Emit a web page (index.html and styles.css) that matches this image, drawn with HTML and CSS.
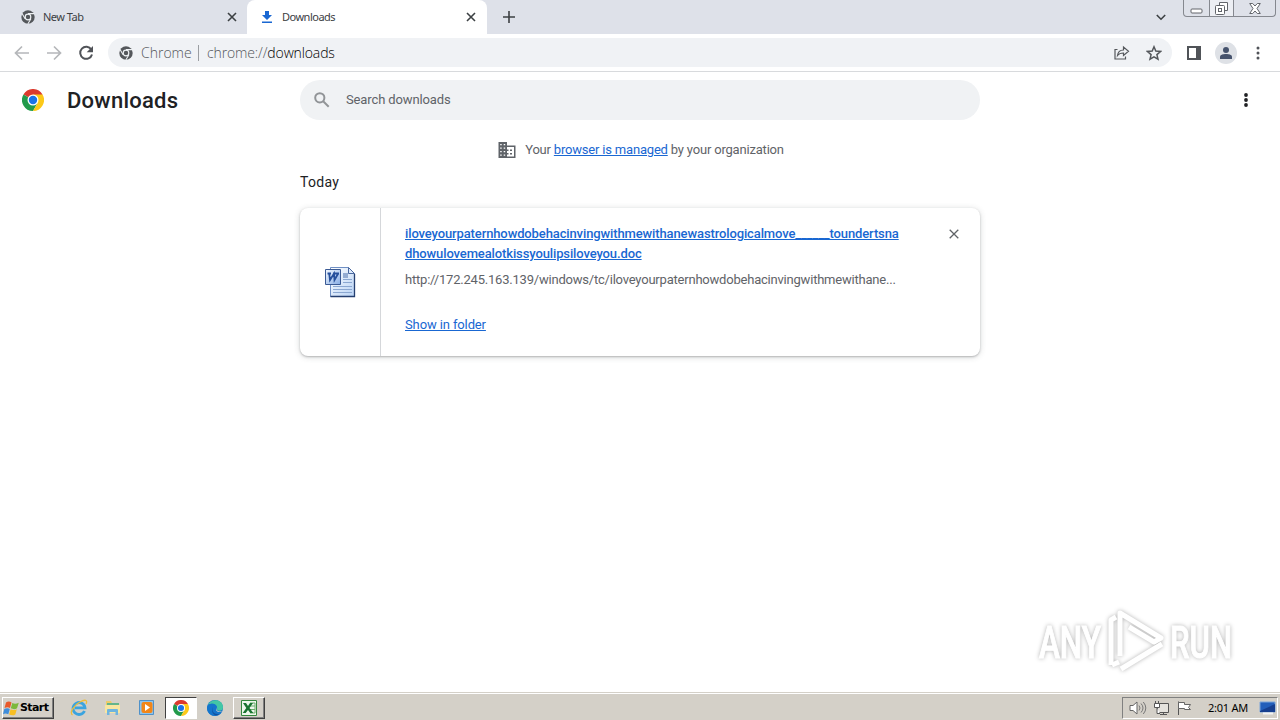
FILE: index.html
```html
<!DOCTYPE html>
<html lang="en">

<head>
    <meta charset="UTF-8">
    <meta name="viewport" content="width=device-width, initial-scale=1.0">
    <title>Downloads</title>
    <link rel="stylesheet" href="styles.css">
</head>

<body>
    <svg class="defs" width="0" height="0">
        <symbol id="chrome-gray" viewBox="0 0 24 24">
            <circle cx="12" cy="12" r="11.5" fill="#54575b" />
            <circle cx="12" cy="12" r="4.8" fill="#54575b" stroke="#eef1f4" stroke-width="2" />
            <path d="M12 6.2h10.8M7 14.9L1.6 5.7M17 14.9l-5.3 9" stroke="#eef1f4" stroke-width="1.8" />
        </symbol>
        <symbol id="chrome-color" viewBox="0 0 24 24">
            <path d="M12 12L1.6 6A12 12 0 0 1 22.4 6z" fill="#db3a2e" />
            <path d="M12 12L1.6 6A12 12 0 0 0 12 24l5.2-9z" fill="#229a4b" />
            <path d="M12 6h10.4A12 12 0 0 1 12 24l5.2-9z" fill="#fcc919" />
            <circle cx="12" cy="12" r="6" fill="#fff" />
            <circle cx="12" cy="12" r="4.6" fill="#1a73e8" />
        </symbol>
    </svg>

    <div class="tab-strip">
        <div class="tab">
            <svg class="tab-icon" width="14" height="14"><use href="#chrome-gray" /></svg>
            <span class="tab-title">New Tab</span>
            <svg class="tab-close" width="10" height="10" viewBox="0 0 10 10"><path d="M1 1l8 8M9 1L1 9" /></svg>
        </div>
        <div class="tab active">
            <svg class="tab-icon" width="14" height="14" viewBox="0 0 14 14"><path d="M5 1h4v4h3L7 10 2 5h3zM2 11.6h10V13H2z" fill="#1967d2" /></svg>
            <span class="tab-title">Downloads</span>
            <svg class="tab-close" width="10" height="10" viewBox="0 0 10 10"><path d="M1 1l8 8M9 1L1 9" /></svg>
        </div>
        <svg class="new-tab" width="12" height="12" viewBox="0 0 12 12"><path d="M6 0v12M0 6h12" /></svg>
        <svg class="tab-search" width="10" height="7" viewBox="0 0 10 7"><path d="M.8 1L5 5.2 9.200 1" /></svg>
        <div class="window-buttons">
            <span class="win-btn min"><svg width="13" height="6" viewBox="0 0 13 6"><rect x="1" y="1" width="11" height="4" rx="1" /></svg></span>
            <span class="win-btn max"><svg width="13" height="13" viewBox="0 0 13 13"><path d="M4.500 3.500v-3h8v8h-3" /><rect x=".5" y="3.500" width="9" height="9" rx="1" /><rect x="3.500" y="6.500" width="3" height="3" /></svg></span>
            <span class="win-btn close"><svg width="12" height="11" viewBox="0 0 12 11"><path d="M.7.500h3L6 3 8.300.500h3L8 5.500l3.300 5h-3L6 8l-2.300 2.500h-3L4 5.500z" /></svg></span>
        </div>
    </div>

    <div class="toolbar">
        <svg class="nav-btn" width="16" height="16" viewBox="0 0 16 16"><path d="M15 8H2M8 1.500L1.500 8 8 14.500" stroke="#b5b7ba" /></svg>
        <svg class="nav-btn" width="16" height="16" viewBox="0 0 16 16"><path d="M1 8h13M8 1.500L14.500 8 8 14.500" stroke="#b5b7ba" /></svg>
        <svg class="nav-btn" width="16" height="16" viewBox="0 0 16 16"><path d="M13.300 4.600A6 6 0 1 0 14 9.400" stroke="#505358" stroke-width="2" /><path d="M15 1v6.300H8.700z" fill="#505358" stroke="none" /></svg>
        <div class="omnibox">
            <svg width="14" height="14"><use href="#chrome-gray" /></svg>
            <span class="chip">Chrome</span>
            <span class="url">chrome://<b>downloads</b></span>
            <svg class="share" width="16" height="15" viewBox="0 0 16 15"><path d="M3.500 4.500H1V14h10.500v-2.500M3.500 10.500C4 6.500 6 5 9.500 5V2l5 4.300-5 4.200V8C7 8 5 8.500 3.500 10.500z" /></svg>
            <svg class="star" width="16" height="16" viewBox="0 0 16 16"><path d="M8 1.800l1.800 4.300 4.700.4-3.600 3.100 1.100 4.600L8 11.800l-4 2.400 1.100-4.600L1.500 6.500l4.700-.4z" /></svg>
        </div>
        <svg class="side-panel" width="14" height="14" viewBox="0 0 14 14"><path d="M1 1h12v12H1z" fill="#fff" stroke="#505358" stroke-width="2" /><path d="M9 0h5v14H9z" fill="#505358" /></svg>
        <span class="avatar"><svg width="12" height="12" viewBox="0 0 12 12"><circle cx="6" cy="3" r="3" /><path d="M0 12v-2c0-2.200 3-3 6-3s6 .8 6 3v2z" /></svg></span>
        <svg class="menu" width="4" height="14" viewBox="0 0 4 14" fill="#505358"><circle cx="2" cy="2" r="1.500" /><circle cx="2" cy="7" r="1.500" /><circle cx="2" cy="12" r="1.500" /></svg>
    </div>

    <div class="page">
        <header class="header">
            <svg class="logo" width="22" height="22"><use href="#chrome-color" /></svg>
            <h1>Downloads</h1>
            <div class="search">
                <svg width="16" height="16" viewBox="0 0 16 16"><circle cx="5.800" cy="5.800" r="4.600" /><path d="M9.200 9.200l5.500 5.500" /></svg>
                <span>Search downloads</span>
            </div>
            <svg class="more" width="4" height="14" viewBox="0 0 4 14" fill="#202124"><circle cx="2" cy="2" r="1.900" /><circle cx="2" cy="7" r="1.900" /><circle cx="2" cy="12" r="1.900" /></svg>
        </header>

        <main class="content">
            <div class="managed">
                <svg width="18" height="16" viewBox="0 0 18 16">
                    <path d="M.5 0H9v3.500h8.500V16H.5z" fill="#5f6368" />
                    <path d="M2.200 2h1.500v1.300H2.200zM5.700 2h1.500v1.300H5.700zM2.200 5.500h1.500v1.300H2.200zM5.700 5.500h1.500v1.300H5.700zM2.200 9h1.500v1.300H2.200zM5.700 9h1.500v1.300H5.700zM2.200 12.500h1.500v1.300H2.200zM5.700 12.500h1.500v1.300H5.700zM9 5h7v9.500H9v-2h1.500V11H9V9h1.500V7.500H9z" fill="#fff" />
                    <path d="M12 7.500h2V9h-2zM12 11h2v1.500h-2z" fill="#5f6368" />
                </svg>
                <p>Your <a>browser is managed</a> by your organization</p>
            </div>
            <h2 class="date">Today</h2>
            <div class="card">
                <div class="file-icon">
                    <svg width="32" height="32" viewBox="0 0 32 32">
                        <defs>
                            <linearGradient id="paper" x1="0" y1="0" x2="1" y2="1"><stop offset="0" stop-color="#fff" /><stop offset="1" stop-color="#b9d3f5" /></linearGradient>
                            <linearGradient id="badge" x1="0" y1="0" x2="1" y2="1"><stop offset="0" stop-color="#f4f9ff" /><stop offset="1" stop-color="#86ace5" /></linearGradient>
                        </defs>
                        <path d="M6.500 1.500h18l6 6v23h-24z" fill="url(#paper)" stroke="#6f8fc4" />
                        <path d="M30.500 8v22.500h-24" fill="none" stroke="#253f70" stroke-width="1.300" />
                        <path d="M24.500 1.500v6h6z" fill="#dbe8fb" stroke="#4a689e" />
                        <path d="M19 7h5v5h-5z" fill="#94acd2" />
                        <path d="M19 13.500h9M19 16.500h9M9 20.500h19M9 23.500h19M9 26.500h19" stroke="#8ba7d1" />
                        <path d="M1.500 3.500h15v15h-15z" fill="url(#badge)" stroke="#3b5a94" />
                        <path d="M3.500 7.500H7M9 7.500h6M5.200 7.500L6 14l4-6.500.500 6.500 3.700-6.500" fill="none" stroke="#254f9c" stroke-width="1.800" />
                    </svg>
                </div>
                <div class="details">
                    <a class="file-name">iloveyourpaternhowdobehacinvingwithmewithanewastrologicalmove______toundertsna<br>dhowulovemealotkissyoulipsiloveyou.doc</a>
                    <p class="file-url">http://172.245.163.139/windows/tc/iloveyourpaternhowdobehacinvingwithmewithane...</p>
                    <a class="show">Show in folder</a>
                </div>
                <svg class="remove" width="10" height="10" viewBox="0 0 10 10"><path d="M.7.700l8.600 8.600M9.300.700L.7 9.300" /></svg>
            </div>
        </main>
    </div>

    <svg class="watermark" width="220" height="72" viewBox="0 0 220 72">
        <text x="9" y="53" textLength="62" lengthAdjust="spacingAndGlyphs">ANY</text>
        <text x="140" y="53" textLength="62" lengthAdjust="spacingAndGlyphs">RUN</text>
        <path d="M81 60V15l5-3" />
        <path d="M90 51V8l41 25-7 4-25-15" />
        <path d="M82 60l7-3M91 64l41-25" />
    </svg>

    <div class="taskbar">
        <div class="start">
            <svg width="17" height="16" viewBox="0 0 17 16">
                <path d="M3 2.500c2-1.500 4-1 5.500 0L7 8C5.500 7 3.500 7 1.500 8z" fill="#e8592b" />
                <path d="M9.300 3c2 1 4 1 6.500-.3L14 8.300c-2 1.200-4 1-6.200 0z" fill="#7cb83c" />
                <path d="M1.300 9c2-1.200 4-1 5.500 0l-1.500 5.300c-2-1.200-4-1-5.300 0z" fill="#3f8ddb" />
                <path d="M7.600 9.300c2 1 4 1 6.200-.1L12.300 14.500c-2 1.200-4 1-6.200 0z" fill="#f8bf24" />
            </svg>
            <span>Start</span>
        </div>
        <div class="task ie">
            <svg width="18" height="18" viewBox="0 0 18 18"><path d="M14.500 12A6 6 0 1 1 15 8.800H5" fill="none" stroke="#3ba4df" stroke-width="2.800" /><path d="M2.500 16C-1 14 4 6 10 3c5-3 8-2 6 2" fill="none" stroke="#edbd3a" stroke-width="1.300" /></svg>
        </div>
        <div class="task">
            <svg width="18" height="18" viewBox="0 0 18 18"><path d="M2 2h5l1 2h7v10H2z" fill="#edcc68" /><path d="M3 4h12v3H3z" fill="#64b58a" /><path d="M1 6h15v8H1z" fill="#f8e6a0" /><path d="M3 16v-5q0-1 1-1h9q1 0 1 1v5h-2.500v-3h-6v3z" fill="#6eb4df" /></svg>
        </div>
        <div class="task">
            <svg width="18" height="18" viewBox="0 0 18 18"><path d="M1.500 1.500h14v14h-14z" fill="#8ec4ec" stroke="#4f91c9" /><rect x="3.500" y="3" width="11" height="11" rx="2" fill="#f28618" /><path d="M7 5l5 3.500L7 12z" fill="#fff" /></svg>
        </div>
        <div class="task pressed">
            <svg width="16" height="16"><use href="#chrome-color" /></svg>
        </div>
        <div class="task">
            <svg width="18" height="18" viewBox="0 0 18 18"><circle cx="9" cy="9" r="8" fill="#1877c9" /><path d="M2 6C5-1 17 0 17 8.500c0 4-6 4-6 1.500C12 6 6 3 2 6z" fill="#43c7a5" /><path d="M1 9c0-5 10-6 10 0 0 0-3 3 2 4l3-.5C11 20 1 17 1 9z" fill="#1475cc" /><path d="M7 8c-2 5 2 8 7 7-5 4-10-2-7-7z" fill="#15509c" /><path d="M10.500 8c-1 3 1 5 6 4.500-4 1.500-8 0-6-4.500z" fill="#d4d0c8" /></svg>
        </div>
        <div class="task raised">
            <svg width="18" height="18" viewBox="0 0 18 18"><path d="M1.500 1.500h15v15h-15z" fill="#eef7ec" stroke="#34873d" /><path d="M10 4h5v10h-5M10 7h5M10 10.500h5" fill="none" stroke="#6bad6c" /><path d="M3 4h3l2 3 2-3h3L9.500 9l3.800 5h-3L8 11l-2.300 3h-3L6.300 9z" fill="#197431" /></svg>
        </div>
        <div class="tray">
            <svg width="18" height="16" viewBox="0 0 18 16"><path d="M1 5.500h3L8 2v12l-4-3.500H1z" fill="#fff" stroke="#666" /><path d="M10 5.500q2 2.500 0 5M12 3.500q4 4.500 0 9M14.300 2q5 6 0 12" fill="none" stroke="#777" /></svg>
            <svg width="17" height="16" viewBox="0 0 17 16"><path d="M4.500 3.500h11v9h-11z" fill="#e4e2dd" stroke="#555" /><path d="M7 14.500h7M10.500 12v2" stroke="#555" /><path d="M1.500 3.500h5v4h-5zM2.500 1v2M5.500 1v2M4 8v5.500h3" fill="#fff" stroke="#555" /></svg>
            <svg width="17" height="16" viewBox="0 0 17 16"><path d="M2.500 15V1.500" stroke="#555" /><path d="M2.500 2.500h6v2h6l-2 3 2 2h-6v-1h-6z" fill="#fff" stroke="#666" /></svg>
            <span class="clock">2:01 AM</span>
            <svg width="17" height="14" viewBox="0 0 17 14"><path d="M1 1h15v10H1z" fill="#245fba" stroke="#7ba5da" /><path d="M1 10L16 3v8H1z" fill="#173f8f" /><path d="M4 12.500h10" stroke="#f3f3f3" stroke-width="2" /></svg>
        </div>
    </div>
</body>

</html>
```
FILE: styles.css
```css
* {
    box-sizing: border-box;
}

body {
    display: flex;
    flex-direction: column;
    height: 720px;
    margin: 0;
    overflow: hidden;
    background: #fff;
    font-family: Roboto, "Liberation Sans", sans-serif;
    color: #202124;
}

svg {
    flex: none;
}

.defs {
    position: absolute;
}

h1,
h2,
p {
    margin: 0;
    font-weight: 400;
}

/* tabs */
.tab-strip {
    display: flex;
    align-items: center;
    height: 34px;
    background: #dee1e9;
    font-family: "Noto Sans", sans-serif;
    font-size: 11px;
}

.tab {
    display: flex;
    align-items: center;
    width: 247px;
    height: 34px;
    padding: 0 10px 0 21px;
    color: #3c4043;
}

.tab.active {
    width: 240px;
    padding: 0 11px 0 13px;
    border-radius: 8px 8px 0 0;
    background: #fff;
}

.tab-title {
    flex: 1;
    margin: -1px 0 0 8px;
    letter-spacing: -.5px;
}

.tab-close,
.new-tab,
.tab-search {
    fill: none;
    stroke: #3c4043;
    stroke-width: 1.6;
}

.new-tab {
    margin-left: 16px;
}

.tab-search {
    margin-left: auto;
    margin-right: 17px;
}

.window-buttons {
    display: flex;
    align-self: flex-start;
    width: 93px;
    height: 17px;
    margin-right: 4px;
    border: 1px solid #85888f;
    border-top: 0;
    border-radius: 0 0 4px 4px;
}

.win-btn {
    display: flex;
    justify-content: center;
    align-items: center;
    width: 25px;
    fill: #fff;
    stroke: #62656b;
}

.win-btn.min {
    padding-top: 5px;
}

.win-btn.max {
    border: solid #85888f;
    border-width: 0 1px;
    background: #eceef3;
}

.win-btn.close {
    flex: 1;
}

/* toolbar */
.toolbar {
    display: flex;
    align-items: center;
    height: 38px;
    padding-left: 14px;
    border-bottom: 1px solid #d8dadd;
}

.nav-btn {
    margin-right: 16px;
    fill: none;
    stroke-width: 1.7;
}

.omnibox {
    display: flex;
    align-items: center;
    width: 1064px;
    height: 29px;
    margin-left: -2px;
    padding: 0 10px 0 11px;
    border-radius: 15px;
    background: #f0f2f5;
    font-family: "Open Sans", "Noto Sans", sans-serif;
    font-size: 14px;
    font-weight: 300;
    color: #54575b;
}

.chip {
    width: 58px;
    margin-left: 8px;
    border-right: 1px solid #9b9ea2;
    line-height: 16px;
}

.url {
    flex: 1;
    margin-left: 8px;
    letter-spacing: -.13px;
}

.url b {
    font-weight: 300;
    color: #000;
}

.share,
.star {
    fill: none;
    stroke: #54575b;
    stroke-width: 1.2;
}

.star {
    margin-left: 16px;
    stroke-width: 1.5;
}

.side-panel {
    margin-left: 15px;
}

.avatar {
    display: flex;
    justify-content: center;
    align-items: center;
    width: 22px;
    height: 22px;
    margin-left: 14px;
    border-radius: 50%;
    background: #dee1e6;
    fill: #46536d;
}

.menu {
    margin-left: 19px;
}

/* page */
.page {
    flex: 1;
}

.header {
    display: flex;
    align-items: center;
    height: 56px;
    padding-left: 22px;
}

.header h1 {
    width: 233px;
    margin-left: 23px;
    font-size: 22px;
    font-weight: 500;
    letter-spacing: .25px;
}

.search {
    display: flex;
    align-items: center;
    width: 680px;
    height: 40px;
    padding-left: 14px;
    border-radius: 20px;
    background: #f0f2f4;
    font-size: 13px;
    letter-spacing: -.12px;
    color: #5f6368;
}

.search span {
    margin-top: -2px;
}

.search svg {
    margin-right: 16px;
    fill: none;
    stroke: #919497;
    stroke-width: 2;
}

.more {
    margin-left: 264px;
}

.content {
    width: 680px;
    margin: 0 auto;
}

.managed {
    display: flex;
    justify-content: center;
    align-items: center;
    height: 44px;
    padding-left: 2px;
    font-size: 13px;
    letter-spacing: -.19px;
    color: #5f6368;
}

.managed p {
    margin-top: -2px;
}

.managed svg {
    margin-right: 9px;
}

a {
    color: #1967d2;
    text-decoration: underline;
}

.date {
    height: 36px;
    font-size: 14px;
    font-weight: 400;
    line-height: 21px;
    letter-spacing: .3px;
}

.card {
    display: flex;
    height: 148px;
    border-radius: 8px;
    background: #fff;
    box-shadow: 0 1px 2px rgba(60, 64, 67, .3), 0 1px 6px rgba(60, 64, 67, .2);
    font-size: 13px;
}

.file-icon {
    display: flex;
    justify-content: center;
    align-items: center;
    width: 81px;
    border-right: 1px solid #d5d7da;
}

.details {
    flex: 1;
    padding: 16px 0 0 24px;
    white-space: nowrap;
}

.file-name {
    display: block;
    font-weight: 500;
    line-height: 20px;
    letter-spacing: -.12px;
}

.file-url {
    margin: 6px 0 25px;
    line-height: 20px;
    letter-spacing: -.21px;
    color: #5f6368;
}

.show {
    line-height: 20px;
    letter-spacing: -.12px;
}

.remove {
    margin: 21px 21px 0 0;
    fill: none;
    stroke: #606367;
    stroke-width: 1.3;
}

.watermark {
    position: absolute;
    left: 1030px;
    top: 605px;
    overflow: visible;
    fill: #fff;
    stroke: #fff;
    filter: drop-shadow(0 0 2px rgba(0, 0, 0, .3));
    font-family: Roboto, sans-serif;
    font-size: 44px;
    line-height: 1;
    font-weight: 500;
}

.watermark path {
    fill: none;
    stroke-width: 5;
    stroke-linejoin: round;
}

/* taskbar */
.taskbar {
    display: flex;
    align-items: center;
    height: 28px;
    padding: 2px 2px 0;
    border-top: 1px solid #d4d0c8;
    background: #d4d0c8;
    box-shadow: inset 0 1px #fff;
}

.start {
    display: flex;
    align-items: center;
    width: 52px;
    height: 22px;
    margin-right: 7px;
    border: 1px solid #404040;
    border-top-color: #fff;
    border-left-color: #fff;
    box-shadow: inset -1px -1px #808080;
    font-family: "DejaVu Sans", sans-serif;
    font-size: 11px;
    font-weight: 700;
    letter-spacing: -.6px;
    color: #000;
}

.task {
    display: flex;
    justify-content: center;
    align-items: center;
    width: 32px;
    height: 22px;
    margin-left: 2px;
}

.task.pressed {
    border: 1px solid #fff;
    border-top-color: #404040;
    border-left-color: #404040;
    background: #fff;
}

.task.raised {
    border: 1px solid #404040;
    border-top-color: #fff;
    border-left-color: #fff;
    box-shadow: inset -1px -1px #808080;
}

.tray {
    display: flex;
    align-items: center;
    gap: 6px;
    width: 156px;
    height: 22px;
    margin-left: auto;
    padding-left: 6px;
    border: 1px solid #fff;
    border-top-color: #808080;
    border-left-color: #808080;
    font-family: "Noto Sans", sans-serif;
    font-size: 11px;
    color: #000;
}

.clock {
    width: 45px;
    margin-left: 9px;
    letter-spacing: -.25px;
    white-space: nowrap;
}
```
